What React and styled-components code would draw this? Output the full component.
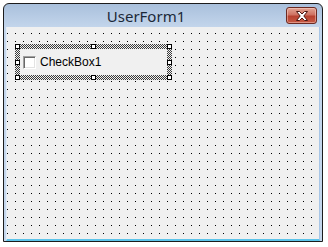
import styled, { createGlobalStyle } from "styled-components";

const GlobalStyle = createGlobalStyle`
  html, body {
    margin: 0;
    padding: 0;
    background: #ffffff;
  }
`;

const App = () => {
  return (
    <>
      <GlobalStyle />
      <StyledWindow>
        <StyledTitleBar>
          <StyledTitle>UserForm1</StyledTitle>
          <StyledCloseButton>
            <svg width="14" height="10" viewBox="0 0 14 10">
              <path
                d="M1.5 0.5 H4.5 L7 3 L9.5 0.5 H12.5 L8.8 5 L12.5 9.5 H9.5 L7 7 L4.5 9.5 H1.5 L5.2 5 Z"
                fill="#ffffff"
                stroke="#4a1610"
                strokeWidth="1"
                strokeLinejoin="round"
              />
            </svg>
          </StyledCloseButton>
        </StyledTitleBar>
        <StyledClient>
          <StyledSelection>
            <StyledControl>
              <StyledCheck />
              <StyledLabel>CheckBox1</StyledLabel>
            </StyledControl>
            {/* sizing handles sit on top of the hatched frame */}
            <StyledHandle left="0" top="0" />
            <StyledHandle left="76px" top="0" />
            <StyledHandle left="152px" top="0" />
            <StyledHandle left="0" top="16px" />
            <StyledHandle left="152px" top="16px" />
            <StyledHandle left="0" top="31px" />
            <StyledHandle left="76px" top="31px" />
            <StyledHandle left="152px" top="31px" />
          </StyledSelection>
        </StyledClient>
      </StyledWindow>
    </>
  );
};

const StyledWindow = styled.div`
  margin: 3px 0 0 3px;
  width: 320px;
  height: 239px;
  box-sizing: border-box;
  border: 1px solid #1c1c1c;
  border-radius: 6px 6px 0 0;
  background: linear-gradient(to bottom, #a9c0dc 0px, #c4d6ec 24px, #c4d6ec 100%);
  display: flex;
  flex-direction: column;
  padding: 0 2px 0 2px;
  overflow: hidden;
`;

const StyledTitleBar = styled.div`
  height: 23px;
  display: flex;
  align-items: flex-start;
  flex-shrink: 0;
`;

const StyledTitle = styled.div`
  flex: 1;
  text-align: center;
  font-family: "Noto Sans", "Open Sans", sans-serif;
  font-size: 15px;
  line-height: 21px;
  color: #1b2838;
  padding-top: 2px;
`;

const StyledCloseButton = styled.div`
  width: 31px;
  height: 17px;
  margin: 3px 3px 0 0;
  box-sizing: border-box;
  border: 1px solid #6b2a22;
  border-radius: 3px;
  background: linear-gradient(to bottom, #e3a594 0%, #cf7262 45%, #b8412f 55%, #c65a44 100%);
  box-shadow: inset 0 0 0 1px rgba(255, 220, 210, 0.45);
  display: flex;
  align-items: center;
  justify-content: center;
`;

const StyledClient = styled.div`
  flex: 1;
  background-color: #f0f0f0;
  background-image:
    linear-gradient(90deg, #f0f0f0 7px, transparent 7px),
    linear-gradient(180deg, #f0f0f0 7px, #000000 7px);
  background-size: 8px 8px;
  background-position: 1px 7px;
  border-left: 1px solid #e3edf8;
  border-bottom: 2px solid #5cc4ea;
  border-right: 1px solid #a8c6e6;
  padding: 17px 0 0 8px;
`;

const StyledSelection = styled.div`
  position: relative;
  width: 157px;
  height: 36px;
  box-sizing: border-box;
  padding: 5px;
  background-color: #f0f0f0;
  background-image: repeating-conic-gradient(#3a3a3a 0 25%, #f0f0f0 0 50%);
  background-size: 2px 2px;
`;

const StyledControl = styled.div`
  height: 26px;
  background: #f0f0f0;
  display: flex;
  align-items: center;
  padding-left: 3px;
  gap: 4px;
`;

const StyledCheck = styled.div`
  width: 13px;
  height: 13px;
  box-sizing: border-box;
  background: #ffffff;
  border-top: 1px solid #a0a0a0;
  border-left: 1px solid #a0a0a0;
  border-right: 1px solid #ffffff;
  border-bottom: 1px solid #ffffff;
  box-shadow: inset 1px 1px 0 #696969, inset -1px -1px 0 #e3e3e3;
  margin-top: 1px;
`;

const StyledLabel = styled.span`
  font-family: "Liberation Sans", Arial, sans-serif;
  font-size: 12px;
  color: #000000;
  line-height: 14px;
`;

const StyledHandle = styled.div`
  position: absolute;
  left: ${props => props.left};
  top: ${props => props.top};
  width: 5px;
  height: 5px;
  box-sizing: border-box;
  border: 1px solid #000000;
  background: #ffffff;
`;

export default App;
